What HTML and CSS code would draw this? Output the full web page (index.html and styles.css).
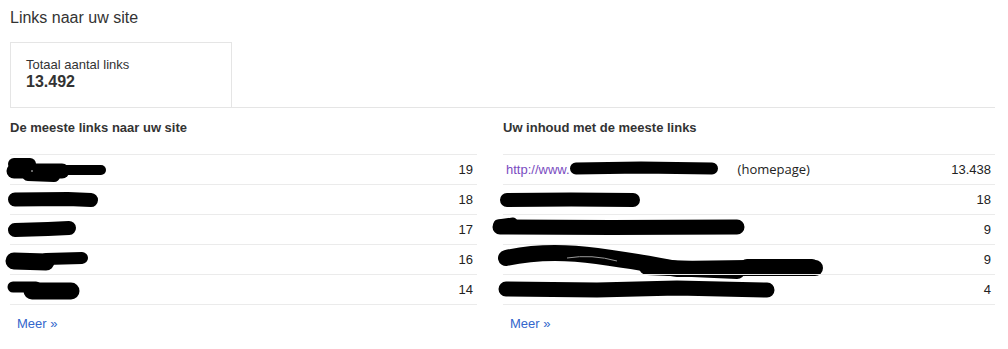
FILE: index.html
```html
<!DOCTYPE html>
<html lang="nl">
<head>
<meta charset="utf-8">
<title>Links naar uw site</title>
<link rel="stylesheet" href="styles.css">
</head>
<body>
<div class="page">
  <h1 class="title">Links naar uw site</h1>

  <div class="summary">
    <div class="stat">
      <div class="stat-label">Totaal aantal links</div>
      <div class="stat-value">13.492</div>
    </div>
  </div>

  <div class="columns">
    <section class="col col-left">
      <h2 class="col-title">De meeste links naar uw site</h2>
      <div class="rows">
        <div class="row">
          <div class="name"><a class="link" href="#">&nbsp;</a>
            <svg class="redact" width="120" height="40" viewBox="0 0 120 40"><g fill="none" stroke="#000" stroke-linecap="round" stroke-linejoin="round"><path d="M6 10 L22 10" stroke-width="12"/><path d="M6 17 L54 17" stroke-width="15"/><path d="M20 21 L46 22" stroke-width="12"/><path d="M52 16 L93 16" stroke-width="10"/></g><circle cx="24" cy="17" r="1" fill="#888"/></svg>
          </div>
          <div class="num">19</div>
        </div>
        <div class="row">
          <div class="name"><a class="link" href="#">&nbsp;</a>
            <svg class="redact" width="120" height="40" viewBox="0 0 120 40"><g fill="none" stroke="#000" stroke-linecap="round"><path d="M7 15.5 L60 15 L83 16" stroke-width="14"/></g></svg>
          </div>
          <div class="num">18</div>
        </div>
        <div class="row">
          <div class="name"><a class="link" href="#">&nbsp;</a>
            <svg class="redact" width="120" height="40" viewBox="0 0 120 40"><g fill="none" stroke="#000" stroke-linecap="round"><path d="M7 16 L40 15 L61 14" stroke-width="14"/></g></svg>
          </div>
          <div class="num">17</div>
        </div>
        <div class="row">
          <div class="name"><a class="link" href="#">&nbsp;</a>
            <svg class="redact" width="120" height="40" viewBox="0 0 120 40"><g fill="none" stroke="#000" stroke-linecap="round"><path d="M6 17 L38 18" stroke-width="17"/><path d="M38 15 L74 14" stroke-width="12"/></g></svg>
          </div>
          <div class="num">16</div>
        </div>
        <div class="row">
          <div class="name"><a class="link" href="#">&nbsp;</a>
            <svg class="redact" width="120" height="40" viewBox="0 0 120 40"><g fill="none" stroke="#000" stroke-linecap="round"><path d="M5 13 L28 13" stroke-width="11"/><path d="M24 17 L63 17" stroke-width="17"/></g></svg>
          </div>
          <div class="num">14</div>
        </div>
      </div>
      <a class="more" href="#">Meer »</a>
    </section>

    <section class="col col-right">
      <h2 class="col-title">Uw inhoud met de meeste links</h2>
      <div class="rows">
        <div class="row">
          <div class="name"><a class="link visited" href="#">http://www.</a><span class="tag">(homepage)</span>
            <svg class="redact" width="240" height="40" viewBox="0 0 240 40"><g fill="none" stroke="#000" stroke-linecap="round"><path d="M75 14.5 L140 13.5 L211 14.5" stroke-width="12"/></g></svg>
          </div>
          <div class="num">13.438</div>
        </div>
        <div class="row">
          <div class="name"><a class="link" href="#">&nbsp;</a>
            <svg class="redact" width="240" height="40" viewBox="0 0 240 40"><g fill="none" stroke="#000" stroke-linecap="round"><path d="M6 16 L70 15.5 L132 16" stroke-width="14"/></g></svg>
          </div>
          <div class="num">18</div>
        </div>
        <div class="row">
          <div class="name"><a class="link" href="#">&nbsp;</a>
            <svg class="redact" width="260" height="40" viewBox="0 0 260 40" style="left:-12px"><g fill="none" stroke="#000" stroke-linecap="round"><path d="M7 10 L22 8" stroke-width="9"/><path d="M9 13 L120 13.5 L246 13" stroke-width="15"/></g></svg>
          </div>
          <div class="num">9</div>
        </div>
        <div class="row">
          <div class="name"><a class="link" href="#">&nbsp;</a>
            <svg class="redact" width="340" height="44" viewBox="0 0 340 44" style="left:-6px"><g fill="none" stroke="#000" stroke-linecap="round" stroke-linejoin="round"><path d="M9 14 Q 50 5, 100 12 T 180 25 L 250 24 L318 24" stroke-width="16"/><path d="M150 23 L240 27" stroke-width="16"/><path d="M250 22 L315 22" stroke-width="14"/></g><path d="M70 14 Q 95 10, 120 17" fill="none" stroke="#9a9a9a" stroke-width="1"/></svg>
          </div>
          <div class="num">9</div>
        </div>
        <div class="row">
          <div class="name"><a class="link" href="#">&nbsp;</a>
            <svg class="redact" width="300" height="40" viewBox="0 0 300 40" style="left:-6px"><g fill="none" stroke="#000" stroke-linecap="round"><path d="M9 15 L100 16 L180 14 L270 16" stroke-width="15"/></g></svg>
          </div>
          <div class="num">4</div>
        </div>
      </div>
      <a class="more" href="#">Meer »</a>
    </section>
  </div>
</div>
</body>
</html>
```

FILE: styles.css
```css
html, body {
  margin: 0;
  padding: 0;
  background: #fff;
}

body {
  font-family: "Liberation Sans", Arial, sans-serif;
  font-size: 13px;
  color: #222;
}

.page {
  padding: 8px 0 0 10px;
  width: 985px;
}

.title {
  margin: 0;
  font-size: 16px;
  line-height: 20px;
  font-weight: normal;
  color: #333;
}

.summary {
  margin-top: 14px;
  border-bottom: 1px solid #e5e5e5;
  display: flex;
}

.stat {
  width: 220px;
  height: 64px;
  border: 1px solid #e5e5e5;
  border-bottom: none;
  box-sizing: content-box;
  padding: 0;
}

.stat-label {
  margin: 14px 0 0 15px;
  font-size: 13px;
  line-height: 15px;
  color: #333;
}

.stat-value {
  margin: 1px 0 0 15px;
  font-size: 16px;
  line-height: 18px;
  font-weight: bold;
  color: #333;
}

.columns {
  display: grid;
  grid-template-columns: 467px 492px;
  column-gap: 26px;
  margin-top: 12px;
}

.col-title {
  margin: 0 0 19px 0;
  font-size: 13px;
  line-height: 15px;
  font-weight: bold;
  color: #333;
}

.rows {
  border-bottom: 1px solid #ebebeb;
}

.row {
  position: relative;
  display: flex;
  justify-content: space-between;
  align-items: center;
  height: 29px;
  border-top: 1px solid #ebebeb;
  line-height: 15px;
}

.name {
  display: flex;
  align-items: center;
  padding-left: 3px;
}

.link {
  color: #1155cc;
  text-decoration: none;
}

.link.visited {
  color: #7a4cbf;
}

.tag {
  margin-left: 168px;
  font-family: "Open Sans", "Liberation Sans", sans-serif;
  font-size: 13px;
  color: #222;
}

.num {
  padding-right: 4px;
  color: #222;
}

.redact {
  position: absolute;
  left: -2px;
  top: -1px;
  overflow: visible;
}

.more {
  display: inline-block;
  margin: 11px 0 0 7px;
  line-height: 15px;
  color: #3366cc;
  text-decoration: none;
}
```
